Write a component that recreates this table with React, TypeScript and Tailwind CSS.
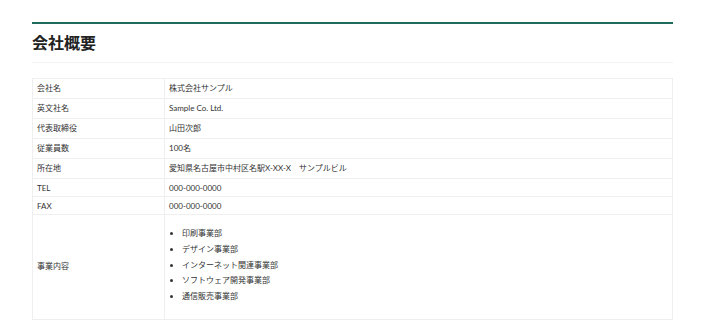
const rows: { label: string; value: string; compact?: boolean }[] = [
  { label: '会社名', value: '株式会社サンプル' },
  { label: '英文社名', value: 'Sample Co. Ltd.' },
  { label: '代表取締役', value: '山田次郎' },
  { label: '従業員数', value: '100名' },
  { label: '所在地', value: '愛知県名古屋市中村区名駅X-XX-X　サンプルビル' },
  { label: 'TEL', value: '000-000-0000', compact: true },
  { label: 'FAX', value: '000-000-0000', compact: true },
];

const divisions = ['印刷事業部', 'デザイン事業部', 'インターネット関連事業部', 'ソフトウェア開発事業部', '通信販売事業部'];

export default function App() {
  return (
    <div className="min-h-[336px] bg-white pt-[22px] font-['Lato','Noto_Sans_CJK_JP',sans-serif] text-[#333]">
      <section className="ml-[32px] w-[641px]">
        <div className="border-t-2 border-[#1f6b5d]" />
        <h2 className="mt-[6px] border-b border-[#f3f3f3] pb-[8px] font-['Noto_Sans_CJK_JP',sans-serif] text-[16px] font-bold leading-normal text-[#222]">
          会社概要
        </h2>

        <table className="mt-[15px] w-full border-collapse text-[8px]">
          <tbody>
            {rows.map((row) => {
              const cell = row.compact ? 'py-[3.5px] leading-[10px]' : 'py-[4px] leading-[11px]';
              return (
                <tr key={row.label}>
                  <th className={`w-[132px] border border-[#efefef] px-[4px] text-left align-middle font-normal ${cell}`}>
                    {row.label}
                  </th>
                  <td className={`border border-[#efefef] px-[4px] align-middle ${cell}`}>{row.value}</td>
                </tr>
              );
            })}
            <tr>
              <th className="w-[132px] border border-[#efefef] px-[4px] py-[4px] text-left align-middle font-normal leading-[11px]">
                事業内容
              </th>
              <td className="border border-[#efefef] px-[4px] pt-[11px] pb-[14px] align-middle">
                <ul className="list-disc pl-[13px] leading-[15.75px]">
                  {divisions.map((item) => (
                    <li key={item}>{item}</li>
                  ))}
                </ul>
              </td>
            </tr>
          </tbody>
        </table>
      </section>
    </div>
  );
}
